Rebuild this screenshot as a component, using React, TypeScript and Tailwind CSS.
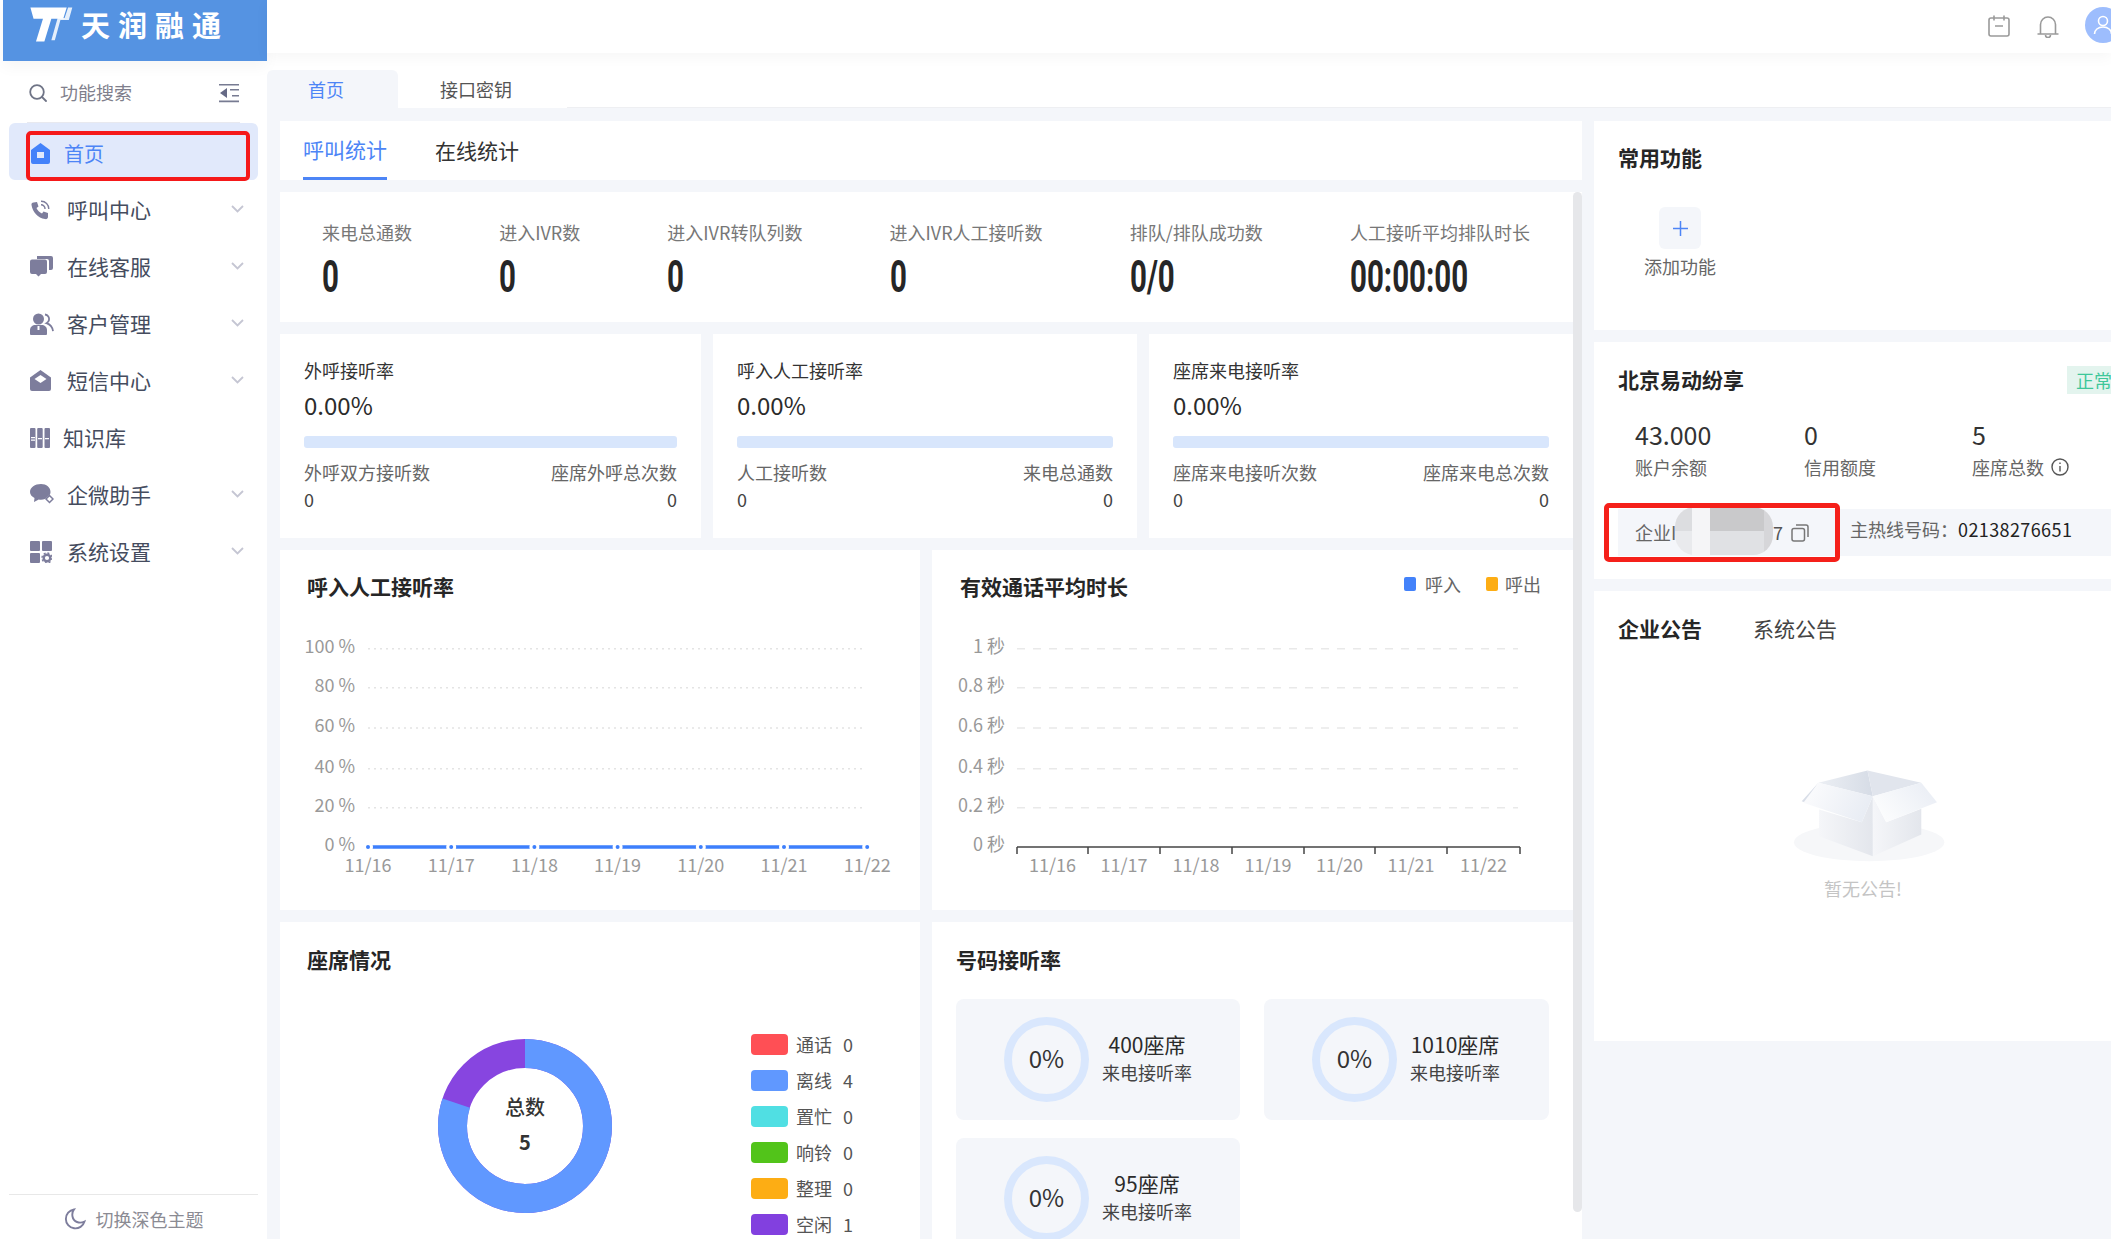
import React from 'react';

const FONT = "font-['Noto_Sans_CJK_SC','Noto_Sans',sans-serif]";
const ICON = '#7d7d9c';

function SearchIcon() {
  return (
    <svg width="18" height="18" viewBox="0 0 18 18" fill="none" stroke="#6f7486" strokeWidth="1.8">
      <circle cx="8" cy="8" r="6.8" />
      <path d="M13 13l4 4" strokeLinecap="round" />
    </svg>
  );
}

function CollapseIcon() {
  return (
    <svg width="20" height="20" viewBox="0 0 20 20">
      <path d="M0 1h20v1.6H0zM0 17.6h20v1.6H0zM11 6h9v1.6h-9zM13 12h7v1.6h-7z" fill="#777b92" />
      <path d="M8 5v10l-7-5z" fill="#666a86" />
    </svg>
  );
}

function HomeIcon() {
  return (
    <svg width="19" height="21" viewBox="0 0 19 21">
      <path
        fillRule="evenodd"
        d="M9.5 0L19 7v12a2 2 0 0 1-2 2H2a2 2 0 0 1-2-2V7zM6 9v6h7V9z"
        fill="#4382fa"
      />
    </svg>
  );
}

function PhoneIcon() {
  return (
    <svg width="20" height="20" viewBox="0 0 20 20" fill={ICON}>
      <path d="M3.5 2.5L7 2l1.5 4.5L6.5 8c1 2.5 3 4.500 5.500 5.500l1.500-2L18 13v4c0 1.500-1.500 2.500-3 2C8 18 2.500 12 1.500 5c-.2-1.500.5-2.500 2-2.500z" />
      <path d="M11 1.200A7.500 7.500 0 0 1 18.800 9M11 4.800A4 4 0 0 1 15 9" fill="none" stroke={ICON} strokeWidth="1.400" />
    </svg>
  );
}

function ChatIcon() {
  return (
    <svg width="23" height="21" viewBox="0 0 23 21" fill={ICON}>
      <path d="M7 0h14a2 2 0 0 1 2 2v10a2 2 0 0 1-2 2h-2V5a2 2 0 0 0-2-2H7z" />
      <path d="M2 3.500h13a2 2 0 0 1 2 2V16a2 2 0 0 1-2 2H11l-2.500 2.500L6 18H2a2 2 0 0 1-2-2V5.500a2 2 0 0 1 2-2z" />
    </svg>
  );
}

function CustomerIcon() {
  return (
    <svg width="24" height="22" viewBox="0 0 24 22" fill={ICON}>
      <circle cx="8.500" cy="6" r="5.500" />
      <path d="M0 21v-4c0-3 2.500-5 5.500-5h6c3 0 5.500 2 5.500 5v4a1 1 0 0 1-1 1H1a1 1 0 0 1-1-1z" />
      <path d="M7.500 13h2v4h-2z" fill="#fff" />
      <path d="M15 1.500c3 .5 4.500 3 4 5.500-.3 1.500-1.200 2.500-2.500 3.200 3.500 1.200 6 3.800 6.500 8" fill="none" stroke={ICON} strokeWidth="1.800" />
    </svg>
  );
}

function MailIcon() {
  return (
    <svg width="21" height="21" viewBox="0 0 21 21">
      <path d="M10.500 0L21 7.500V19a2 2 0 0 1-2 2H2a2 2 0 0 1-2-2V7.500z" fill={ICON} />
      <path d="M10.500 5l6 4-6 4-6-4z" fill="#fff" />
    </svg>
  );
}

function BooksIcon() {
  return (
    <svg width="20" height="20" viewBox="0 0 20 20" fill={ICON}>
      <rect x="0" width="5.500" height="20" rx="1" />
      <rect x="7.200" width="5.500" height="20" rx="1" />
      <rect x="14.500" width="5.500" height="20" rx="1" />
      <path d="M1 9h4v1.200H1zM1 11.500h4v1.200H1zM8 10h4v1.200H8zM15 10h4v1.200h-4z" fill="#fff" />
    </svg>
  );
}

function WechatIcon() {
  return (
    <svg width="24" height="21" viewBox="0 0 24 21">
      <path d="M11 0c5.500 0 9.500 3.500 9.500 8 0 1-.2 1.800-.5 2.500l-5 4.500c-1.200.5-2.600.7-4 .7-.8 0-1.500 0-2.200-.2L4 18l.5-4C1.800 12.500 0 10.500 0 8c0-4.500 5-8 11-8z" fill={ICON} />
      <path d="M19.500 11.500l3.500 3.500-3.500 3.500-3.500-3.500z" fill="none" stroke={ICON} strokeWidth="1.500" />
    </svg>
  );
}

function GridIcon() {
  return (
    <svg width="22" height="22" viewBox="0 0 22 22" fill={ICON}>
      <rect width="10" height="10" rx="1" />
      <rect x="12" width="10" height="10" rx="1" />
      <rect y="12" width="10" height="10" rx="1" />
      <circle cx="17" cy="17" r="3.300" fill="none" stroke={ICON} strokeWidth="2.400" />
      <circle cx="17" cy="17" r="5" fill="none" stroke={ICON} strokeWidth="1.400" strokeDasharray="2 1.900" />
    </svg>
  );
}

function ChevronIcon() {
  return (
    <svg width="13" height="8" viewBox="0 0 13 8" fill="none" stroke="#c5c6d3" strokeWidth="1.800">
      <path d="M1 1l5.500 5.500L12 1" />
    </svg>
  );
}

const menu = [
  { label: '呼叫中心', icon: <PhoneIcon />, arrow: true, textClass: 'ml-[13px]' },
  { label: '在线客服', icon: <ChatIcon />, arrow: true, textClass: 'ml-[13px]' },
  { label: '客户管理', icon: <CustomerIcon />, arrow: true, textClass: 'ml-[13px]' },
  { label: '短信中心', icon: <MailIcon />, arrow: true, textClass: 'ml-[13px]' },
  { label: '知识库', icon: <BooksIcon />, arrow: false, textClass: 'ml-[9px]' },
  { label: '企微助手', icon: <WechatIcon />, arrow: true, textClass: 'ml-[13px]' },
  { label: '系统设置', icon: <GridIcon />, arrow: true, textClass: 'ml-[13px]' },
];

function Sidebar() {
  return (
    <aside className="flex h-full w-[267px] shrink-0 flex-col bg-white">
      <div className="z-10 ml-[3px] flex h-[61px] items-center bg-[#5593e2] pb-[12px] pl-[26px] shadow-[0_6px_14px_rgba(0,0,0,0.04)]">
        <svg width="44" height="38" viewBox="88 26 126 104" fill="#fff" className="shrink-0">
          <path d="M92 28h104l-10 32h-34l-20 65h-24l20-65h-27z" />
          <path d="M200 28h12l-10 36h-24l-16 58h-10l18-64h20z" opacity=".85" />
        </svg>
        <span className="ml-[8px] text-[29px] leading-none font-bold tracking-[8px] text-white">天润融通</span>
      </div>

      <div className="mx-[27px] flex h-[62px] items-center justify-between border-b border-[#e8e9ef] pt-[2px] pr-[3px]">
        <div className="flex items-center">
          <span className="ml-[2px]">
            <SearchIcon />
          </span>
          <span className="ml-[13px] text-[18px] text-[#7f7f8c]">功能搜索</span>
        </div>
        <span className="-mr-[2px]">
          <CollapseIcon />
        </span>
      </div>

      <div className="relative mx-[9px] flex h-[57px] items-center rounded-[6px] bg-[#e1e9fb] pt-1 pl-[22px]">
        <HomeIcon />
        <span className="ml-[14px] text-[20px] text-[#4d85f6]">首页</span>
        <div className="absolute top-[8px] left-[17px] h-[50px] w-[224px] rounded-[5px] border-4 border-[#f5191a]" />
      </div>

      {menu.map(m => (
        <div key={m.label} className="mx-[9px] flex h-[57px] items-center pt-[2px] pl-[21px]">
          <span className="flex w-[24px] justify-start">{m.icon}</span>
          <span className={`${m.textClass} flex-1 text-[21px] text-[#454c5e]`}>{m.label}</span>
          {m.arrow && (
            <span className="mr-[14px] -translate-y-[1px]">
              <ChevronIcon />
            </span>
          )}
        </div>
      ))}

      <div className="mx-[9px] mt-auto flex h-[45px] items-center justify-center gap-[10px] border-t border-[#e8e8e8] pt-[4px]">
        <svg width="22" height="22" viewBox="0 0 22 22" fill="none" stroke="#7d7d9c" strokeWidth="1.900">
          <path d="M10 1.500a9.500 9.500 0 1 0 10.500 12c-5 2.500-11 .5-12-5C8 6 8.500 3.500 10 1.500z" />
        </svg>
        <span className="text-[18px] text-[#8b8b93]">切换深色主题</span>
      </div>
    </aside>
  );
}

function TopBar() {
  return (
    <>
      <header className="z-10 flex h-[53px] shrink-0 items-start bg-white pt-[7px] shadow-[0_4px_14px_rgba(0,0,0,0.04)]">
        <div className="ml-auto flex items-start">
          <svg width="22" height="22" viewBox="0 0 22 22" fill="none" stroke="#9a9a9a" strokeWidth="1.600" className="mt-[8px]">
            <rect x="1" y="3" width="20" height="18" rx="2" />
            <path d="M6 0.500v5M16 0.500v5M7 11h8" />
          </svg>
          <svg width="22" height="23" viewBox="0 0 22 23" fill="none" stroke="#9a9a9a" strokeWidth="1.600" className="mt-[8px] ml-[27px]">
            <path d="M0.500 19h21M3.500 19V9.500a7.500 7.500 0 0 1 15 0V19M8.500 20a2.500 2.500 0 0 0 5 0" />
          </svg>
          <div className="mr-[-10px] ml-[26px] flex h-[36px] w-[36px] shrink-0 items-center justify-center rounded-full bg-[#9dbdfd]">
            <svg width="20" height="20" viewBox="0 0 20 20" fill="none" stroke="#fff" strokeWidth="1.600">
              <circle cx="10" cy="6" r="4.500" />
              <path d="M1.500 19c0-4 3.500-7 8.500-7s8.500 3 8.500 7" />
            </svg>
          </div>
        </div>
      </header>
      <div className="flex h-[55px] shrink-0 items-end bg-white">
        <div className="flex h-[38px] w-[131px] items-center rounded-t-[6px] bg-[#f4f6fa] pl-[41px] text-[18px] text-[#4d85f6]">首页</div>
        <div className="flex h-[38px] w-[169px] items-center pl-[42px] text-[18px] text-[#555]">接口密钥</div>
        <div className="flex-1 self-stretch border-b border-[#eeeff2]" />
      </div>
    </>
  );
}

const stats = [
  { label: '来电总通数', value: '0' },
  { label: '进入IVR数', value: '0' },
  { label: '进入IVR转队列数', value: '0' },
  { label: '进入IVR人工接听数', value: '0' },
  { label: '排队/排队成功数', value: '0/0' },
  { label: '人工接听平均排队时长', value: '00:00:00' },
];

const rates = [
  { title: '外呼接听率', left: '外呼双方接听数', right: '座席外呼总次数' },
  { title: '呼入人工接听率', left: '人工接听数', right: '来电总通数' },
  { title: '座席来电接听率', left: '座席来电接听次数', right: '座席来电总次数' },
];

function RateCard({ title, left, right }: { title: string; left: string; right: string }) {
  return (
    <div className="bg-white px-6 pt-6">
      <div className="text-[18px] leading-6 text-[#333]">{title}</div>
      <div className="mt-[8px] text-[24px] leading-[30px] text-[#2b2b2b]">0.00%</div>
      <div className="mt-[16px] h-[12px] rounded-[3px] bg-[#d8e6fc]" />
      <div className="mt-[12px] flex justify-between text-[18px] leading-6 text-[#666]">
        <span>{left}</span>
        <span>{right}</span>
      </div>
      <div className="mt-[3px] flex justify-between text-[18px] leading-6 text-[#444]">
        <span>0</span>
        <span>0</span>
      </div>
    </div>
  );
}

const dates = ['11/16', '11/17', '11/18', '11/19', '11/20', '11/21', '11/22'];
const gridY = [24.7, 63.7, 104, 144.7, 183.7, 223];

function RateChart() {
  const ys = ['100 %', '80 %', '60 %', '40 %', '20 %', '0 %'];
  const xs = dates.map((_, i) => 88 + 83.2 * i);
  return (
    <svg width="640" height="286" viewBox="0 0 640 286" fill="#999" fontSize="18">
      {ys.map((t, i) => (
        <g key={t}>
          <text x="75" y={gridY[i] + 4} textAnchor="end">{t}</text>
          {i < 5 && <line x1="88" x2="584" y1={gridY[i]} y2={gridY[i]} stroke="#e4e4e4" strokeWidth="1.500" strokeDasharray="2 4" />}
        </g>
      ))}
      <line x1="88" x2="587" y1="223" y2="223" stroke="#3d7ffc" strokeWidth="3.500" />
      {xs.map(x => (
        <g key={x}>
          <circle cx={x} cy="223" r="5" fill="#fff" />
          <circle cx={x} cy="223" r="2" fill="#3d7ffc" />
        </g>
      ))}
      {dates.map((d, i) => (
        <text key={d} x={xs[i]} y="248" textAnchor="middle">{d}</text>
      ))}
    </svg>
  );
}

function DurationChart() {
  const ys = ['1 秒', '0.8 秒', '0.6 秒', '0.4 秒', '0.2 秒', '0 秒'];
  const ticks = [85, 156, 228, 300, 372, 443, 515, 588];
  return (
    <svg width="640" height="286" viewBox="0 0 640 286" fill="#999" fontSize="18">
      {ys.map((t, i) => (
        <g key={t}>
          <text x="73" y={gridY[i] + 4} textAnchor="end">{t}</text>
          {i < 5 && <line x1="85" x2="586" y1={gridY[i]} y2={gridY[i]} stroke="#e9e9e9" strokeWidth="1.500" strokeDasharray="8 8" />}
        </g>
      ))}
      <line x1="85" x2="588" y1="223" y2="223" stroke="#444" strokeWidth="1.500" />
      {ticks.map(x => (
        <line key={x} x1={x} x2={x} y1="223" y2="230" stroke="#444" strokeWidth="1.500" />
      ))}
      {dates.map((d, i) => (
        <text key={d} x={(ticks[i] + ticks[i + 1]) / 2} y="248" textAnchor="middle">{d}</text>
      ))}
    </svg>
  );
}

const seats = [
  { label: '通话', value: 0, color: 'bg-[#ff4f55]' },
  { label: '离线', value: 4, color: 'bg-[#6098ff]' },
  { label: '置忙', value: 0, color: 'bg-[#50dfe3]' },
  { label: '响铃', value: 0, color: 'bg-[#52c41a]' },
  { label: '整理', value: 0, color: 'bg-[#fdad14]' },
  { label: '空闲', value: 1, color: 'bg-[#8240df]' },
];

function Donut() {
  const c = 2 * Math.PI * 72.5;
  return (
    <svg width="174" height="174" viewBox="0 0 174 174" className="mt-[4px] shrink-0">
      <g transform="rotate(-90 87 87)" fill="none" strokeWidth="29">
        <circle cx="87" cy="87" r="72.500" stroke="#8745e0" />
        <circle cx="87" cy="87" r="72.500" stroke="#6098ff" strokeDasharray={`${c * 0.8} ${c}`} />
      </g>
      <text x="87" y="76" textAnchor="middle" fontSize="20" fontWeight="500" fill="#333">总数</text>
      <text x="87" y="111" textAnchor="middle" fontSize="20" fontWeight="700" fill="#333">5</text>
    </svg>
  );
}

function NumberCard({ name }: { name: string }) {
  return (
    <div className="flex h-[121px] items-center rounded-[8px] bg-[#f4f6fa] pl-[48px]">
      <div className="flex h-[85px] w-[85px] shrink-0 items-center justify-center rounded-full border-[8px] border-[#d9e7fd] pb-[3px] text-[24px] text-[#333]">
        0%
      </div>
      <div className="ml-[13px] w-[90px] -translate-y-[2px] text-center">
        <div className="text-[21px] leading-7 whitespace-nowrap text-[#2b2b2b]">{name}</div>
        <div className="text-[18px] leading-7 text-[#444]">来电接听率</div>
      </div>
    </div>
  );
}

function EmptyBox() {
  return (
    <svg width="157" height="97" viewBox="600 140 470 290">
      <defs>
        <linearGradient id="gBack" x1="0" x2="1" y1="0" y2="0">
          <stop offset="0" stopColor="#eceff4" />
          <stop offset="1" stopColor="#d6dce6" />
        </linearGradient>
        <linearGradient id="gFlapL" x1="0" x2="1" y1="0" y2="0.300">
          <stop offset="0" stopColor="#fdfdfe" />
          <stop offset="1" stopColor="#e9edf4" />
        </linearGradient>
        <linearGradient id="gFlapR" x1="0" x2="1" y1="0.500" y2="0">
          <stop offset="0" stopColor="#fbfcfd" />
          <stop offset="1" stopColor="#e8ecf4" />
        </linearGradient>
        <linearGradient id="gBody" x1="0" x2="1" y1="0" y2="0">
          <stop offset="0" stopColor="#f5f6f9" />
          <stop offset="1" stopColor="#e3e6ec" />
        </linearGradient>
      </defs>
      <ellipse cx="837" cy="368" rx="225" ry="57" fill="#f6f7f9" />
      <polygon points="685,190 832,153 848,230" fill="url(#gBack)" />
      <polygon points="832,153 993,190 848,230" fill="#e1e5ed" />
      <polygon points="685,190 635,245 648,250" fill="#d9dee8" />
      <polygon points="687,270 815,308 848,230 848,410 687,350" fill="url(#gBody)" />
      <polygon points="848,230 888,308 993,268 993,345 848,410" fill="url(#gBody)" />
      <polygon points="685,190 848,230 815,308 640,250" fill="url(#gFlapL)" />
      <polygon points="848,230 993,190 1040,248 888,308" fill="url(#gFlapR)" />
    </svg>
  );
}

function RightColumn() {
  return (
    <div className="flex w-[517px] shrink-0 flex-col gap-[12px]">
      <section className="h-[209px] bg-white pt-[22px] pl-[24px]">
        <h3 className="text-[21px] leading-7 font-bold text-[#262626]">常用功能</h3>
        <div className="mt-[36px] ml-[26px] flex w-[72px] flex-col items-center">
          <div className="flex h-[42px] w-[42px] items-center justify-center rounded-[6px] bg-[#f4f6fa]">
            <svg width="15" height="15" viewBox="0 0 15 15" stroke="#4d85f6" strokeWidth="1.500">
              <path d="M7.500 0v15M0 7.500h15" />
            </svg>
          </div>
          <span className="mt-[5px] text-[18px] leading-6 whitespace-nowrap text-[#666]">添加功能</span>
        </div>
      </section>

      <section className="h-[237px] bg-white pt-[23px] pl-[24px]">
        <div className="flex items-start justify-between">
          <h3 className="text-[21px] leading-7 font-bold text-[#262626]">北京易动纷享</h3>
          <span className="mt-[1px] flex h-[28px] w-[44px] items-center overflow-hidden bg-[#e3f4ee] pl-[9px] text-[18px] whitespace-nowrap text-[#3ec79a]">正常</span>
        </div>
        <div className="mt-[24px] flex pl-[17px]">
          <div className="w-[169px]">
            <div className="text-[25px] leading-8 text-[#333]">43.000</div>
            <div className="mt-[5px] text-[18px] leading-6 text-[#666]">账户余额</div>
          </div>
          <div className="w-[168px]">
            <div className="text-[25px] leading-8 text-[#333]">0</div>
            <div className="mt-[5px] text-[18px] leading-6 text-[#666]">信用额度</div>
          </div>
          <div>
            <div className="text-[25px] leading-8 text-[#333]">5</div>
            <div className="mt-[5px] flex items-center gap-[7px] text-[18px] leading-6 text-[#666]">
              座席总数
              <svg width="18" height="18" viewBox="0 0 18 18" fill="none" stroke="#555" strokeWidth="1.400">
                <circle cx="9" cy="9" r="8" />
                <path d="M9 8v5.500M9 4.500v1.600" />
              </svg>
            </div>
          </div>
        </div>
        <div className="relative mt-[30px] flex h-[47px] items-center bg-[#f4f6fa]">
          <div className="flex w-[222px] shrink-0 items-center pl-[17px]">
            <span className="w-[138px] overflow-hidden text-[18px] whitespace-nowrap text-[#666]">企业ID：</span>
            <span className="text-[18px] text-[#555]">7</span>
            <svg width="18" height="18" viewBox="0 0 18 18" fill="none" stroke="#777" strokeWidth="1.500" className="ml-[8px]">
              <rect x="1" y="4.500" width="12.500" height="12.500" rx="2" />
              <path d="M5 1h10a2 2 0 0 1 2 2v10" />
            </svg>
          </div>
          <div className="ml-[10px] -translate-y-[3px] text-[18px] whitespace-nowrap text-[#666]">
            主热线号码：<span className="tracking-[0.4px] text-[#222]">02138276651</span>
          </div>
          {/* mosaic over the company id */}
          <div className="absolute top-[-2px] left-[57px] flex h-[48px] w-[98px] overflow-hidden rounded-[20px] bg-[#f4f5f7]">
            <div className="flex w-[17px] flex-col">
              <div className="flex-1 bg-[#dcdde0]" />
              <div className="flex-1 bg-[#e9eaed]" />
            </div>
            <div className="w-[18px] bg-[#f5f5f7]" />
            <div className="flex w-[54px] flex-col">
              <div className="flex-1 bg-[#c9c9cb]" />
              <div className="flex-1 bg-[#e0e1e4]" />
            </div>
            <div className="flex-1 bg-[#d6d6d9]" />
          </div>
          <div className="absolute top-[-6px] left-[-14px] h-[59px] w-[236px] rounded-[5px] border-[5px] border-[#f5201a]" />
        </div>
      </section>

      <section className="h-[450px] bg-white pt-[23px] pl-[24px]">
        <div className="flex gap-[51px] text-[21px] leading-7">
          <span className="font-bold text-[#262626]">企业公告</span>
          <span className="text-[#444]">系统公告</span>
        </div>
        <div className="mt-[124px] ml-[172px]">
          <EmptyBox />
        </div>
        <div className="mt-[13px] ml-[206px] text-[18px] leading-6 text-[#c4c4c4]">暂无公告!</div>
      </section>
    </div>
  );
}

export default function App() {
  return (
    <div className={`${FONT} flex h-[1239px] w-[2111px] overflow-hidden bg-[#f4f6fa]`}>
      <Sidebar />
      <div className="flex min-w-0 flex-1 flex-col">
        <TopBar />
        <div className="flex min-h-0 flex-1 gap-[12px] pt-[13px] pl-[13px]">
          <div className="flex w-[1302px] shrink-0 flex-col gap-[12px]">
            <div className="flex h-[59px] shrink-0 gap-[48px] bg-white pl-[23px] text-[21px]">
              <span className="flex items-center border-b-[3px] border-[#4d85f6] pt-[1px] text-[#4d85f6]">呼叫统计</span>
              <span className="flex items-center text-[#333]">在线统计</span>
            </div>
            <div className="flex min-h-0 flex-1">
              <div className="flex w-[1293px] shrink-0 flex-col gap-[12px]">
                <div className="flex h-[130px] shrink-0 justify-between bg-white pt-[28px] pr-[43px] pl-[42px]">
                  {stats.map(s => (
                    <div key={s.label}>
                      <div className="text-[18px] leading-6 whitespace-nowrap text-[#777]">{s.label}</div>
                      <div className="mt-[11px] h-[44px] w-0 origin-left scale-x-[0.67] font-['Roboto',sans-serif] text-[44px] leading-[44px] font-bold whitespace-nowrap text-[#262626]">
                        {s.value}
                      </div>
                    </div>
                  ))}
                </div>
                <div className="grid h-[204px] shrink-0 grid-cols-[421px_424px_424px] gap-[12px]">
                  {rates.map(r => (
                    <RateCard key={r.title} {...r} />
                  ))}
                </div>
                <div className="grid h-[360px] shrink-0 grid-cols-[640px_641px] gap-[12px]">
                  <div className="bg-white">
                    <div className="h-[74px] pt-[22px] pl-[27px] text-[21px] leading-7 font-bold text-[#262626]">呼入人工接听率</div>
                    <RateChart />
                  </div>
                  <div className="bg-white">
                    <div className="flex h-[74px] items-start justify-between pt-[22px] pr-[32px] pl-[28px]">
                      <span className="text-[21px] leading-7 font-bold text-[#262626]">有效通话平均时长</span>
                      <div className="flex items-center text-[18px] leading-6 text-[#666]">
                        <span className="h-[14px] w-[12px] rounded-[2px] bg-[#4382fa]" />
                        <span className="ml-[9px]">呼入</span>
                        <span className="ml-[25px] h-[14px] w-[12px] rounded-[2px] bg-[#fdad14]" />
                        <span className="ml-[7px]">呼出</span>
                      </div>
                    </div>
                    <DurationChart />
                  </div>
                </div>
                <div className="grid min-h-0 flex-1 grid-cols-[640px_641px] gap-[12px] overflow-hidden">
                  <div className="bg-white pt-[23px]">
                    <div className="pl-[27px] text-[21px] leading-7 font-bold text-[#262626]">座席情况</div>
                    <div className="mt-[62px] ml-[158px] flex items-start">
                      <Donut />
                      <div className="-mt-[1px] ml-[139px] flex flex-col gap-[15px]">
                        {seats.map(s => (
                          <div key={s.label} className="flex h-[21px] items-center text-[18px] text-[#555]">
                            <span className={`h-[21px] w-[37px] rounded-[4px] ${s.color}`} />
                            <span className="ml-[8px] whitespace-nowrap">{s.label}</span>
                            <span className="ml-[11px]">{s.value}</span>
                          </div>
                        ))}
                      </div>
                    </div>
                  </div>
                  <div className="bg-white pt-[23px] pl-[24px]">
                    <div className="text-[21px] leading-7 font-bold text-[#262626]">号码接听率</div>
                    <div className="mt-[26px] grid grid-cols-[284px_285px] gap-x-[24px] gap-y-[18px]">
                      <NumberCard name="400座席" />
                      <NumberCard name="1010座席" />
                      <NumberCard name="95座席" />
                    </div>
                  </div>
                </div>
              </div>
              <div className="w-[9px] shrink-0 bg-white">
                <div className="h-[1020px] rounded-[5px] bg-[#e6e7ea]" />
              </div>
            </div>
          </div>
          <RightColumn />
        </div>
      </div>
    </div>
  );
}
